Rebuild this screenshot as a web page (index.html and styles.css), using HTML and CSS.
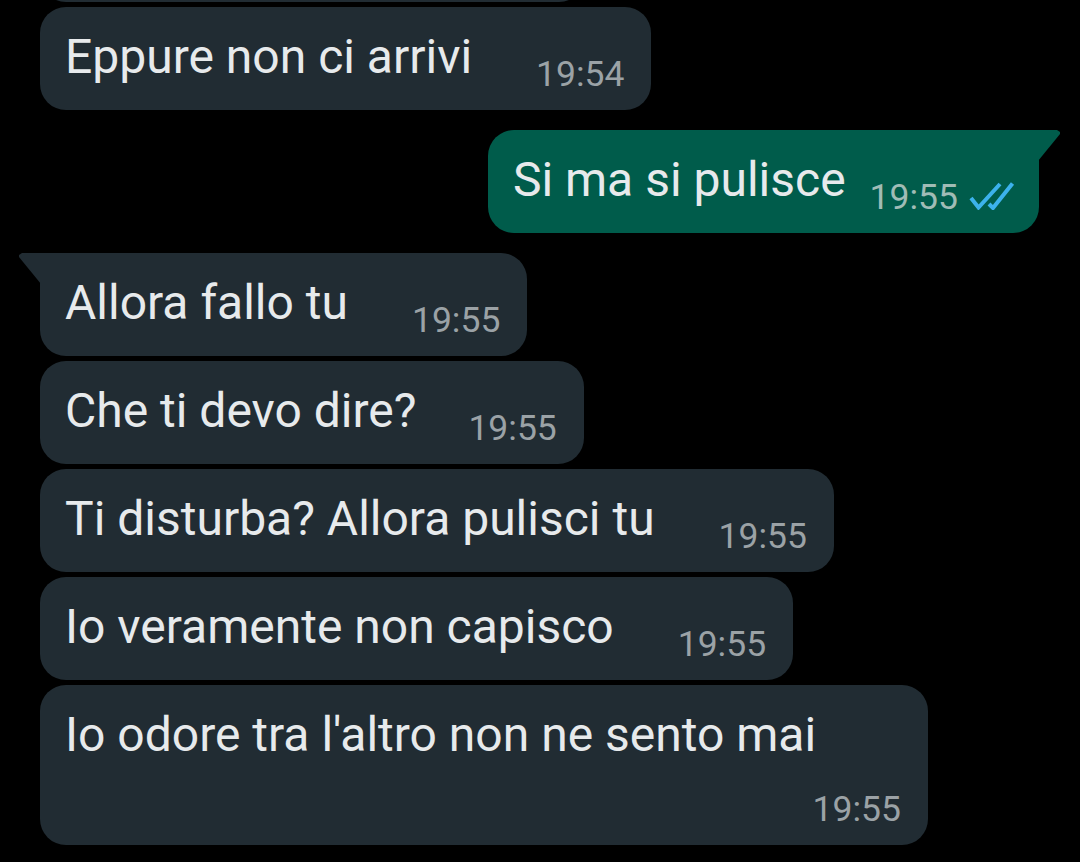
FILE: index.html
```html
<!DOCTYPE html>
<html lang="it">
<head>
  <meta charset="UTF-8" />
  <meta name="viewport" content="width=device-width, initial-scale=1" />
  <title>Chat</title>
  <link rel="stylesheet" href="styles.css">
</head>
<body>
  <main class="chat">
    <div class="msg in partial"></div>
    <div class="msg in next">
      <span class="text">Eppure non ci arrivi</span>
      <span class="time">19:54</span>
    </div>

    <div class="msg out first">
      <span class="text">Si ma si pulisce</span>
      <span class="time">19:55
        <svg class="ticks" width="46" height="28" viewBox="0 0 46 28">
          <path d="M2 16 L9.5 25.5 L31 2" />
          <path d="M20 22 L24 26 L43.5 1.5" />
        </svg>
      </span>
    </div>

    <div class="msg in first">
      <span class="text">Allora fallo tu</span>
      <span class="time">19:55</span>
    </div>
    <div class="msg in next">
      <span class="text tight">Che ti devo dire?</span>
      <span class="time">19:55</span>
    </div>
    <div class="msg in next">
      <span class="text">Ti disturba? Allora pulisci tu</span>
      <span class="time">19:55</span>
    </div>
    <div class="msg in next">
      <span class="text">Io veramente non capisco</span>
      <span class="time">19:55</span>
    </div>
    <div class="msg in next">
      <span class="text">Io odore tra l'altro non ne sento mai</span>
      <span class="time">19:55</span>
    </div>
  </main>
</body>
</html>
```

FILE: styles.css
```css
html, body {
  margin: 0;
  padding: 0;
  background: #000;
  height: 100%;
  overflow: hidden;
}
body {
  font-family: Roboto, 'Noto Sans', sans-serif;
  color: #e7eaec;
}
.chat {
  display: flex;
  flex-direction: column;
  padding: 0 41px 0 40px;
  margin-top: -101px;
}
.msg {
  position: relative;
  display: flex;
  flex-wrap: wrap;
  align-items: flex-end;
  row-gap: 19px;
  max-width: 888px;
  box-sizing: border-box;
  padding: 22px 27px 17px 25px;
  border-radius: 26px;
}
.msg.in {
  align-self: flex-start;
  background: #212c33;
}
.msg.partial {
  width: 545px;
  height: 103px;
}
.msg.out {
  align-self: flex-end;
  background: #005c4b;
  padding-right: 24px;
}
.msg.next {
  margin-top: 5px;
}
.msg.first {
  margin-top: 20px;
}
.text {
  font-size: 48px;
  line-height: 56px;
  margin-bottom: 8px;
  margin-right: 64px;
}
.text.tight {
  margin-right: 52px;
}
.msg.out .text {
  margin-right: 24px;
}
.time {
  margin-left: auto;
  display: inline-flex;
  align-items: flex-end;
  font-size: 35.5px;
  line-height: 38px;
  color: #9ba2a6;
}
.msg.out .time {
  color: #a0bcb6;
}
.ticks {
  margin-left: 11px;
  margin-bottom: 6px;
  fill: none;
  stroke: #3cb2ec;
  stroke-width: 4;
}

/* tails */
.msg.in.first {
  border-top-left-radius: 0;
}
.msg.in.first::before {
  content: "";
  position: absolute;
  top: 0;
  left: -21px;
  width: 22px;
  height: 31px;
  background: #212c33;
  clip-path: polygon(3px 0, 100% 0, 100% 100%, 0 4px, 0 2px);
}
.msg.out.first {
  border-top-right-radius: 0;
}
.msg.out.first::after {
  content: "";
  position: absolute;
  top: 0;
  right: -21px;
  width: 22px;
  height: 31px;
  background: #005c4b;
  clip-path: polygon(0 0, calc(100% - 3px) 0, 100% 2px, 100% 4px, 0 100%);
}
```
